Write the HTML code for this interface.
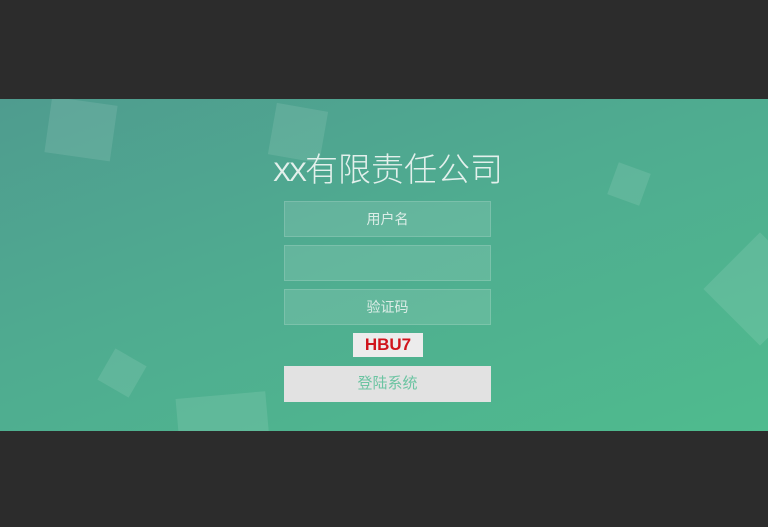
<!DOCTYPE html>
<html><head><style>
body{margin:0;width:768px;height:527px;background:#2c2c2c;overflow:hidden;position:relative;font-family:"Liberation Sans","Noto Sans CJK SC",sans-serif}
.g{position:absolute;left:0;top:99px;width:768px;height:332px;background:linear-gradient(160deg,#4f9c8f 0%,#4fac90 45%,#4fbb8e 100%);overflow:hidden}
.sq{position:absolute;background:rgba(255,255,255,.1)}
.t{position:absolute;left:4px;width:768px;top:44px;text-align:center;color:#e3f0ec;font-size:33px;font-weight:300}
.t span{font-size:27px;letter-spacing:-2px}
.in{position:absolute;left:284px;width:205px;height:34px;border:1px solid rgba(255,255,255,.15);background:rgba(255,255,255,.12);color:#dcede7;font-size:14px;text-align:center;line-height:34px}
.cap{position:absolute;left:353px;top:234px;width:70px;height:24px;background:#ececec;color:#d0141c;font-weight:bold;font-size:17px;text-align:center;line-height:24px}
.btn{position:absolute;left:284px;top:267px;width:207px;height:36px;background:#e2e2e2;color:#6cc4a2;font-size:15px;text-align:center;line-height:36px}
</style></head><body>
<div class="g">
<div class="sq" style="left:48px;top:2px;width:66px;height:56px;transform:rotate(8deg)"></div>
<div class="sq" style="left:272px;top:8px;width:52px;height:52px;transform:rotate(10deg)"></div>
<div class="sq" style="left:612px;top:68px;width:34px;height:34px;transform:rotate(20deg)"></div>
<div class="sq" style="left:720px;top:150px;width:80px;height:80px;transform:rotate(45deg)"></div>
<div class="sq" style="left:104px;top:256px;width:36px;height:36px;transform:rotate(30deg)"></div>
<div class="sq" style="left:178px;top:296px;width:90px;height:60px;transform:rotate(-5deg)"></div>
<div class="t"><span>XX</span>有限责任公司</div>
<div class="in" style="top:102px">用户名</div>
<div class="in" style="top:146px"></div>
<div class="in" style="top:190px">验证码</div>
<div class="cap">HBU7</div>
<div class="btn">登陆系统</div>
</div>
</body></html>
